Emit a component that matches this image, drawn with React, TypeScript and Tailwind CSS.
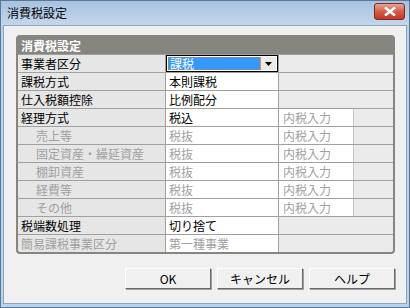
import React from "react";

type Row = {
  label: string;
  value: string;
  sub?: string;
  disabled?: boolean;
  indent?: boolean;
  combo?: boolean;
};

const rows: Row[] = [
  { label: "事業者区分", value: "課税", combo: true },
  { label: "課税方式", value: "本則課税" },
  { label: "仕入税額控除", value: "比例配分" },
  { label: "経理方式", value: "税込", sub: "内税入力" },
  { label: "売上等", value: "税抜", sub: "内税入力", disabled: true, indent: true },
  { label: "固定資産・繰延資産", value: "税抜", sub: "内税入力", disabled: true, indent: true },
  { label: "棚卸資産", value: "税抜", sub: "内税入力", disabled: true, indent: true },
  { label: "経費等", value: "税抜", sub: "内税入力", disabled: true, indent: true },
  { label: "その他", value: "税抜", sub: "内税入力", disabled: true, indent: true },
  { label: "税端数処理", value: "切り捨て" },
  { label: "簡易課税事業区分", value: "第一種事業", disabled: true },
];

const font = { fontFamily: '"Noto Sans CJK JP", "Liberation Sans", sans-serif' };

const Combo: React.FC<{ value: string }> = ({ value }) => (
  <div className="h-[17px] w-[113px] border border-black bg-white p-[1px] flex">
    <div className="flex-1 bg-[#3399ff] border border-dotted border-[#c08040] text-white pl-[1px] leading-[12px] text-[12px]">
      {value}
    </div>
    <div className="w-[16px] bg-[#ece9e6] border-l border-[#a0a0a0] flex items-center justify-center">
      <svg width="7" height="4" viewBox="0 0 7 4">
        <path d="M0 0h7L3.5 4z" fill="#000" />
      </svg>
    </div>
  </div>
);

const Button: React.FC<{ label: string }> = ({ label }) => (
  <button className="w-[86px] h-[21px] bg-[#f0f0f0] border border-t-white border-l-white border-r-[#696969] border-b-[#696969] shadow-[1px_1px_0_#a0a0a0] text-[12px] text-black leading-none">
    {label}
  </button>
);

export default function App() {
  return (
    <div
      className="w-[410px] h-[308px] flex flex-col bg-[#b9d1ea] border border-[#5a7898]"
      style={font}
    >
      {/* title bar */}
      <div className="h-[24px] flex items-center justify-between bg-gradient-to-b from-[#a7c2df] to-[#c3d7ec] pl-[6px] pr-[4px]">
        <span className="text-[12px] text-black leading-none">消費税設定</span>
        <div className="w-[31px] h-[17px] mb-[3px] rounded-[3px] border border-[#7c2a22] bg-gradient-to-b from-[#e4a597] via-[#d25c48] to-[#c13826] flex items-center justify-center">
          <svg width="12" height="9" viewBox="0 0 12 9">
            <path d="M1 0.5l10 8M11 0.5l-10 8" stroke="#fff" strokeWidth="2.6" />
          </svg>
        </div>
      </div>

      {/* client */}
      <div className="flex-1 mx-[2px] mb-[3px] bg-[#f0f0f0] border border-[#8ea2b8] pt-[9px] pl-[12px] pr-[11px] flex flex-col">
        <div className="w-[379px] border-2 border-[#878580] rounded-[4px] bg-[#878580] overflow-hidden">
          <div className="h-[17px] flex items-center pl-[3px] text-white font-bold text-[12px] leading-none">
            消費税設定
          </div>
          {rows.map((r) => {
            const c = r.disabled ? "text-[#a0a0a0]" : "text-black";
            return (
              <div key={r.label} className="flex h-[18px] text-[12px] leading-none border-t border-[#a0a0a0]">
                <div
                  className={`w-[148px] bg-[#e6e6e6] border-r border-[#a0a0a0] flex items-center ${
                    r.indent ? "pl-[18px]" : "pl-[3px]"
                  } ${c}`}
                >
                  {r.label}
                </div>
                <div className={`w-[113px] bg-white border-r border-[#a0a0a0] flex items-center ${c} ${r.combo ? "" : "pl-[3px]"}`}>
                  {r.combo ? <Combo value={r.value} /> : r.value}
                </div>
                {r.sub ? (
                  <div className="w-[75px] bg-white border-r border-[#c8c8c8] flex items-center pl-[4px] text-[#a0a0a0]">
                    {r.sub}
                  </div>
                ) : (
                  <div className="w-[75px] bg-[#ebebeb]" />
                )}
                <div className="flex-1 bg-[#ebebeb]" />
              </div>
            );
          })}
        </div>

        <div className="mt-[14px] flex justify-end gap-[6px]">
          <Button label="OK" />
          <Button label="キャンセル" />
          <Button label="ヘルプ" />
        </div>
      </div>
    </div>
  );
}
